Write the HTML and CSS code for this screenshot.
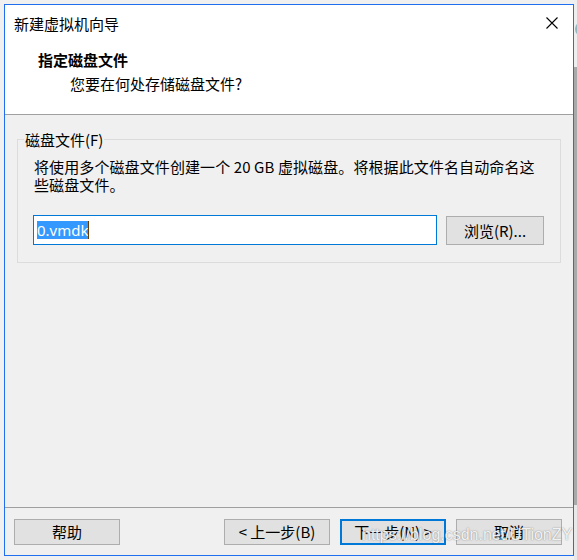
FILE: index.html
```html
<!DOCTYPE html>
<html lang="zh-CN">
<head>
<meta charset="utf-8">
<title>新建虚拟机向导</title>
<link rel="stylesheet" href="styles.css">
</head>
<body>
<div class="screen">
  <div class="window">
    <header class="head">
      <div class="titlebar">
        <span class="title">新建虚拟机向导</span>
        <svg class="close" width="12" height="12" viewBox="0 0 12 12" aria-hidden="true">
          <path d="M0.5 0.5 L11.5 11.5 M11.5 0.5 L0.5 11.5" stroke="#000" stroke-width="1.1" fill="none"/>
        </svg>
      </div>
      <div class="heading">指定磁盘文件</div>
      <div class="subtitle">您要在何处存储磁盘文件?</div>
    </header>
    <main class="content">
      <section class="group">
        <div class="group-title">磁盘文件(F)</div>
        <p class="desc">将使用多个磁盘文件创建一个 20 GB 虚拟磁盘。将根据此文件名自动命名这<br>些磁盘文件。</p>
        <div class="file-row">
          <div class="textbox"><span class="sel">0.vmdk</span><span class="caret"></span></div>
          <button class="btn browse">浏览(R)...</button>
        </div>
      </section>
    </main>
    <footer class="foot">
      <button class="btn">帮助</button>
      <span class="spacer"></span>
      <button class="btn">&lt; 上一步(B)</button>
      <button class="btn primary">下一步(N) &gt;</button>
      <button class="btn">取消</button>
    </footer>
    <div class="watermark">https://blog.csdn.net/UTionZY</div>
  </div>
  <div class="edge"><span class="edge-dot"></span></div>
</div>
</body>
</html>
```
FILE: styles.css
```css
html, body {
  margin: 0;
  padding: 0;
}
body {
  background: #f0f0f0;
  font-family: "Noto Sans CJK SC", "Noto Sans", sans-serif;
  font-size: 15px;
  color: #000;
}
.screen {
  width: 577px;
  height: 560px;
  box-sizing: border-box;
  padding: 4px 0 0 4px;
  display: flex;
  align-items: flex-start;
  overflow: hidden;
}
.window {
  position: relative;
  width: 570px;
  height: 552px;
  box-sizing: border-box;
  border: 1px solid #1f6ff0;
  background: #f0f0f0;
  display: flex;
  flex-direction: column;
  flex: none;
}
.edge {
  flex: 1;
  align-self: stretch;
  margin-top: -4px;
  height: 560px;
  background: linear-gradient(to bottom, #eeeeee 0, #eeeeee 67px, #a9a9a9 67px, #a9a9a9 505px, #e8e8e8 505px);
  position: relative;
}
.edge-dot {
  position: absolute;
  left: 1px;
  top: 21px;
  width: 16px;
  height: 16px;
  border-radius: 50%;
  background: #8fb8c0;
}

/* header */
.head {
  background: #fff;
  height: 109px;
  border-bottom: 1px solid #a0a0a0;
  flex: none;
}
.titlebar {
  display: flex;
  align-items: flex-start;
  justify-content: space-between;
  padding: 9px 15px 0 9px;
  height: 20px;
  line-height: 20px;
}
.close {
  margin-top: 3px;
  display: block;
}
.heading {
  margin-top: 16px;
  padding-left: 33px;
  font-weight: 700;
  line-height: 20px;
}
.subtitle {
  margin-top: 4px;
  padding-left: 65px;
  line-height: 20px;
}

/* content */
.content {
  flex: 1;
}
.group {
  margin: 24px 12px 0 12px;
  padding: 0 16px 17px 16px;
  border: 1px solid #dcdcdc;
}
.group-title {
  width: max-content;
  margin: -10px 0 0 -10px;
  padding: 0 1px;
  background: #f0f0f0;
  line-height: 20px;
}
.desc {
  margin: 8px 0 0 0;
  line-height: 18px;
  white-space: nowrap;
  letter-spacing: 0.1px;
}
.file-row {
  margin: 21px 0 0 -1px;
  display: flex;
  align-items: flex-start;
  gap: 9px;
}
.textbox {
  width: 405px;
  height: 30px;
  box-sizing: border-box;
  border: 1px solid #0078d7;
  background: #fff;
  padding-left: 3px;
  display: flex;
  align-items: center;
}
.sel {
  background: #3399ff;
  color: #fff;
  line-height: 18px;
  font-family: "Noto Sans", "Noto Sans CJK SC", sans-serif;
  font-size: 15px;
}
.caret {
  width: 1px;
  height: 18px;
  background: #6b3a00;
}
.btn {
  font-family: "Noto Sans CJK SC", "Noto Sans", sans-serif;
  font-size: 15px;
  color: #000;
  background: #e1e1e1;
  border: 1px solid #adadad;
  width: 106px;
  height: 26px;
  box-sizing: border-box;
  padding: 0;
  line-height: 22px;
  flex: none;
}
.browse {
  width: 98px;
  height: 29px;
  margin-top: 1px;
}
.primary {
  border: 2px solid #0078d7;
}

/* footer */
.foot {
  flex: none;
  border-top: 1px solid #a0a0a0;
  padding: 11px 11px 10px 9px;
  display: flex;
  gap: 10px;
}
.spacer {
  flex: 1;
}
.watermark {
  position: absolute;
  left: 357px;
  top: 521px;
  font-family: "Liberation Sans", Arial, sans-serif;
  font-size: 16px;
  color: rgba(255, 255, 255, 0.9);
  text-shadow: 0 0 1px rgba(80, 80, 80, 0.55), 0 0 2px rgba(120, 120, 120, 0.4);
  white-space: nowrap;
  pointer-events: none;
}
```
